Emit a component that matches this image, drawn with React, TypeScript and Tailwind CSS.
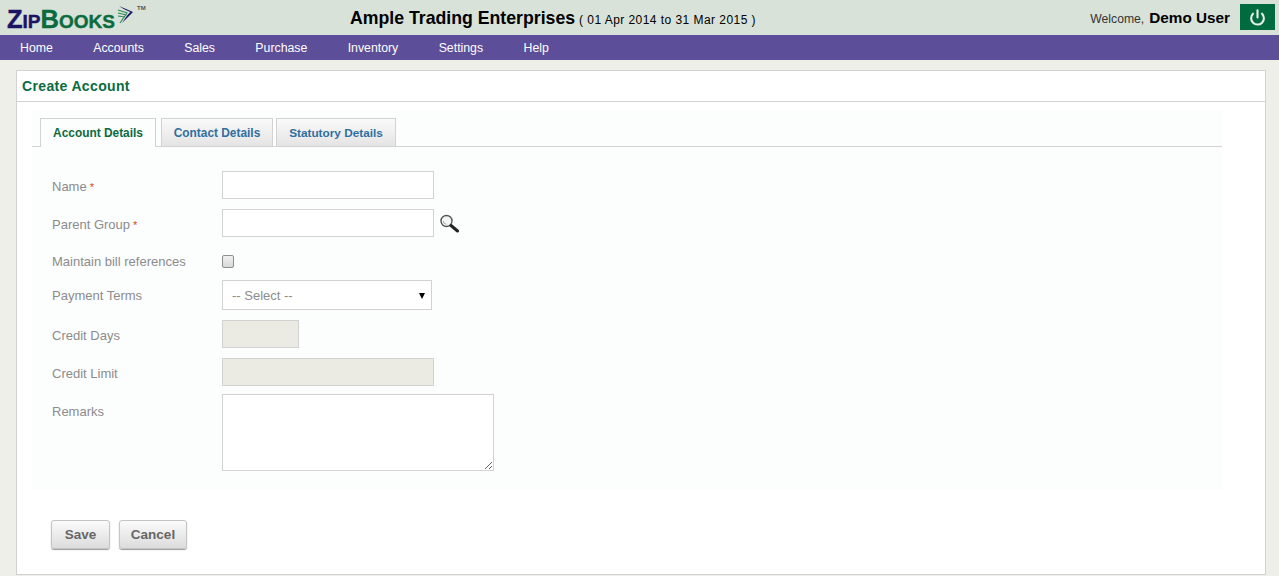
import { Power } from "lucide-react";

const navItems = ["Home", "Accounts", "Sales", "Purchase", "Inventory", "Settings", "Help"];

function Logo() {
    return (
        <div className="relative ml-[7px] mt-[4px] flex h-[31px] w-[140px] items-start">
            <span className="font-['Liberation_Sans',sans-serif] text-[25.5px] leading-[30px] font-bold [-webkit-text-stroke:0.4px] whitespace-nowrap">
                <span className="text-[#1b1464]">Z</span>
                <span className="text-[19px] text-[#1b1464]">IP</span>
                <span className="text-[#0b6b3f]">B</span>
                <span className="text-[19px] text-[#0b6b3f]">OOKS</span>
            </span>
            {/* arrow mark next to the wordmark */}
            <svg className="absolute left-[108px] top-[1px]" width="26" height="20" viewBox="0 0 26 20" fill="none">
                <path d="M4 1 L18 7 L7 18 L14 7.5 Z" fill="#1b1464" />
                <path d="M7 3.4 L15.4 7 L9.5 13 L13 7.5 Z" fill="#d8e2d8" />
                <path d="M3 5 L12.5 8 M3 8 L11.5 10 M3 11 L10 12 M5 18 L12 8" stroke="#2e8b57" strokeWidth="1.2" />
            </svg>
            <span className="absolute left-[130px] top-[0px] text-[6px] leading-[9px] font-bold text-[#555]">TM</span>
        </div>
    );
}

function Header() {
    return (
        <header className="flex h-[35px] items-start justify-between bg-[#d8e2d8]">
            <Logo />
            <div className="absolute left-[350px] top-[8px] flex items-baseline whitespace-nowrap text-black">
                <span className="text-[17.7px] leading-[20px] font-bold">Ample Trading Enterprises</span>
                <span className="ml-[4px] text-[12px] tracking-[0.45px]">( 01 Apr 2014 to 31 Mar 2015 )</span>
            </div>
            <div className="flex items-start">
                <span className="mt-[10px] text-[12.2px] leading-[18px] text-[#333]">Welcome,</span>
                <span className="ml-[5px] mt-[9px] text-[15.3px] leading-[18px] font-bold text-black">Demo User</span>
                <button className="ml-[10px] mr-[4px] mt-[4px] flex h-[26px] w-[35px] items-center justify-center bg-[#006b3f]">
                    <Power className="h-[17px] w-[17px] text-[#e6f0ea]" strokeWidth={3} />
                </button>
            </div>
        </header>
    );
}

function Nav() {
    return (
        <nav className="flex h-[25px] items-center gap-[40.4px] bg-[#5d4e99] pl-[20px] pt-[1px] text-[12.3px] text-white">
            {navItems.map((item) => (
                <span key={item}>{item}</span>
            ))}
        </nav>
    );
}

function Tabs() {
    return (
        <div className="flex h-[29px] items-end gap-[5px] border-b border-[#d2d2d2] pl-[8px]">
            <div className="mb-[-1px] flex h-[29px] w-[116px] items-center justify-center border border-b-0 border-[#d2d2d2] bg-[#fcfdfd] pt-[1px] text-[11.9px] font-bold text-[#0b6b3f]">
                Account Details
            </div>
            <div className="flex h-[28px] w-[112px] items-center justify-center border border-b-0 border-[#d2d2d2] bg-gradient-to-b from-[#fafafa] to-[#e4e4e4] pt-[2px] text-[11.9px] font-bold text-[#2f6f9f]">
                Contact Details
            </div>
            <div className="ml-[-2px] flex h-[28px] w-[120px] items-center justify-center border border-b-0 border-[#d2d2d2] bg-gradient-to-b from-[#fafafa] to-[#e4e4e4] pt-[2px] text-[11.8px] font-bold text-[#2f6f9f]">
                Statutory Details
            </div>
        </div>
    );
}

function Row({ label, required, className, children }: { label: string; required?: boolean; className: string; children: React.ReactNode }) {
    return (
        <div className={`flex ${className}`}>
            <label className="ml-[20px] mt-[4px] w-[170px] shrink-0 text-[13px] leading-[16px] text-[#8c8c8c]">
                {label}
                {required && <span className="ml-[3px] text-[11px] text-[#d9480f]">*</span>}
            </label>
            {children}
        </div>
    );
}

const inputClass = "block h-[28px] w-[212px] border border-[#d2d2d2] bg-white";
const disabledClass = "block h-[28px] border border-[#d2d2d2] bg-[#ebebe4]";

function Form() {
    return (
        <div className="pt-[24px]">
            <Row label="Name" required className="h-[28px] items-center">
                <input className={inputClass} />
            </Row>
            <Row label="Parent Group" required className="mt-[10px] h-[28px] items-center">
                <input className={inputClass} />
                <svg className="ml-[6px]" width="20" height="20" viewBox="0 0 20 20" fill="none">
                    <circle cx="6.5" cy="8" r="5.5" stroke="#555" strokeWidth="1.4" fill="#f4f6f6" />
                    <path d="M3.3 8 A3.4 3.4 0 0 0 6.5 11.3" stroke="#aaa" strokeWidth="1" />
                    <path d="M11 12.5 L17.5 18" stroke="#222" strokeWidth="3" strokeLinecap="round" />
                </svg>
            </Row>
            <Row label="Maintain bill references" className="mt-[17px] h-[14px] items-center [&>label]:mt-[2px]">
                <span className="block h-[13px] w-[12px] rounded-[2px] border border-[#8f8f8f] bg-gradient-to-b from-[#f0f0f0] to-[#d8d8d8]" />
            </Row>
            <Row label="Payment Terms" className="mt-[12px] h-[30px] items-center [&>label]:mt-[2px]">
                <div className="flex h-[30px] w-[210px] items-center justify-between border border-[#d2d2d2] bg-white pl-[9px] pr-[6px] pt-[1px] text-[13px] text-[#8c8c8c]">
                    <span>-- Select --</span>
                    <span className="h-0 w-0 border-x-[3.5px] border-t-[6px] border-x-transparent border-t-black" />
                </div>
            </Row>
            <Row label="Credit Days" className="mt-[10px] h-[28px] items-center">
                <div className={`${disabledClass} w-[77px]`} />
            </Row>
            <Row label="Credit Limit" className="mt-[10px] h-[28px] items-center">
                <div className={`${disabledClass} w-[212px]`} />
            </Row>
            <Row label="Remarks" className="mt-[8px] h-[77px] items-start [&>label]:mt-[10px]">
                <div className="relative h-[77px] w-[272px] border border-[#d2d2d2] bg-white">
                    <svg className="absolute bottom-0 right-0" width="9" height="9" viewBox="0 0 9 9" stroke="#666" strokeWidth="1">
                        <path d="M1 8 L8 1 M5 8 L8 5" />
                    </svg>
                </div>
            </Row>
        </div>
    );
}

export default function App() {
    return (
        <div className="relative h-[576px] overflow-hidden bg-[#eeefe8] font-['Liberation_Sans',Arial,sans-serif]">
            <Header />
            <Nav />
            <main className="mx-[16px] mt-[10px] h-[505px] w-[1250px] border border-[#d2d2d2] bg-white">
                <h1 className="flex h-[31px] items-center border-b border-[#d2d2d2] pl-[5px] text-[14px] font-bold tracking-[0.35px] text-[#0b6b3f]">
                    Create Account
                </h1>
                <div className="ml-[15px] mt-[8px] h-[380px] w-[1190px] bg-[#fcfdfd] pt-[8px]">
                    <Tabs />
                    <Form />
                </div>
                <div className="ml-[34px] mt-[30px] flex gap-[9px]">
                    <button className="h-[29px] w-[59px] rounded-[3px] border border-[#c4c4c4] bg-gradient-to-b from-[#fbfbfb] to-[#dcdcdc] pt-[1px] text-[13.5px] font-bold text-[#666] shadow-[0_1px_1px_#999]">
                        Save
                    </button>
                    <button className="h-[29px] w-[68px] rounded-[3px] border border-[#c4c4c4] bg-gradient-to-b from-[#fbfbfb] to-[#dcdcdc] pt-[1px] text-[13.5px] font-bold text-[#666] shadow-[0_1px_1px_#999]">
                        Cancel
                    </button>
                </div>
            </main>
        </div>
    );
}
